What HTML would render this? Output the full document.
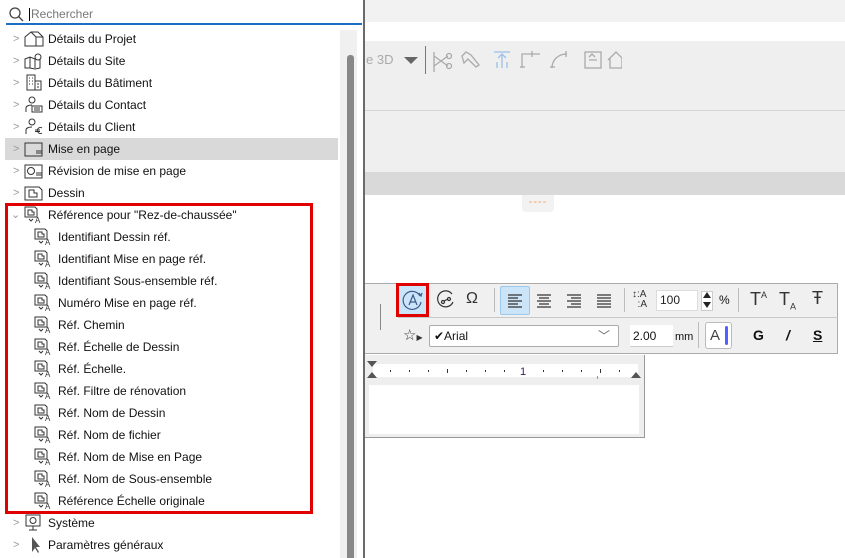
<!DOCTYPE html>
<html><head><meta charset="utf-8"><style>
*{margin:0;padding:0;box-sizing:border-box}
body{width:845px;height:558px;position:relative;overflow:hidden;background:#fff;font-family:"Liberation Sans",sans-serif;font-size:12px;color:#111}
.a{position:absolute}
.row{position:absolute;left:5px;width:333px;height:22px;line-height:22px}
.row .t{position:absolute;left:43px;top:0;white-space:nowrap}
.row.sub .t{left:53px}
.chev{position:absolute;left:8px;top:0;color:#999;font-size:11px}
.ic{position:absolute;left:19px;top:2px}
.row.sub .ic{left:29px}
.tb{color:#333;font-size:13px}
</style></head><body>
<div class="a" style="left:365px;top:0;width:480px;height:22px;background:#f2f2f2"></div>
<div class="a" style="left:365px;top:41px;width:480px;height:131px;background:#efefef"></div>
<div class="a" style="left:365px;top:110px;width:480px;height:1px;background:#d4d4d4"></div>
<div class="a" style="left:365px;top:172px;width:480px;height:23px;background:#d9d9d9"></div>
<div class="a" style="left:522px;top:195px;width:32px;height:17px;background:#f2f2f2;border-radius:0 0 4px 4px;color:#f5a050;font-size:11px;text-align:center;line-height:14px;letter-spacing:1px">----</div>
<div class="a" style="left:366px;top:52px;color:#aaa;font-size:13px">e 3D</div>
<div class="a" style="left:404px;top:57px;width:0;height:0;border-left:7px solid transparent;border-right:7px solid transparent;border-top:7px solid #666"></div>
<div class="a" style="left:425px;top:46px;width:1px;height:28px;background:#777"></div>
<svg class="a" style="left:432px;top:48px" width="190" height="24" fill="none" stroke="#aaa" stroke-width="1.3">
<path d="M2 4v24M2 8l14 10M2 18l14-10"/><circle cx="17" cy="8" r="2.5"/><circle cx="17" cy="18" r="2.5"/>
<path d="M30 8l4-4 5 3 8 10-3 2-8-8-4 4z"/>
<path d="M62 4h16M70 20V6M66 10l4-4 4 4M65 20v-6M75 20v-6" stroke="#9bbfe8"/>
<path d="M90 20V6h18M100 3v6M88 19h5"/>
<path d="M120 20c0-8 6-14 15-14M134 3v6M118 19h5"/>
<rect x="153" y="4" width="16" height="16"/><path d="M157 12h8M157 9l3-3 3 3"/>
<path d="M176 12l8-8 8 8M178 10v10h12V10"/>
</svg>
<div class="a" style="left:365px;top:283px;width:473px;height:71px;background:#f0f0f0;border:1px solid #ababab;border-left:none"></div>
<div class="a" style="left:398px;top:317px;width:440px;height:1px;background:#c8c8c8"></div>
<div class="a" style="left:380px;top:304px;width:1px;height:26px;background:#888"></div>
<div class="a" style="left:396px;top:283px;width:33px;height:34px;border:3px solid #e00000;background:#cce4f7"></div>
<svg class="a" style="left:401px;top:288px" width="24" height="24" fill="none" stroke="#3b5b8c" stroke-width="1.2"><path d="M19 8a9 9 0 1 0 1 6"/><path d="M8 17l4-10 4 10M9.5 14h5"/><path d="M18 5l2 3 1-3"/></svg>
<svg class="a" style="left:434px;top:288px" width="24" height="24" fill="none" stroke="#333" stroke-width="1.2"><path d="M18 6a8 8 0 1 0 1 8"/><circle cx="9" cy="14" r="1.5"/><circle cx="15" cy="11" r="1.5"/><path d="M10 13l4-2"/></svg>
<div class="a tb" style="left:466px;top:290px;font-size:16px">Ω</div>
<div class="a" style="left:494px;top:288px;width:1px;height:24px;background:#bbb"></div>
<div class="a" style="left:500px;top:286px;width:30px;height:29px;background:#cce4f7;border:1px solid #99c9ef;border-radius:2px"></div>
<svg class="a" style="left:505px;top:292px" width="110" height="16" stroke="#333" stroke-width="1.3"><path d="M3 3h14M3 6h10M3 9h14M3 12h10M3 15h14"/><path d="M32 3h14M34 6h10M32 9h14M34 12h10M32 15h14"/><path d="M62 3h14M66 6h10M62 9h14M66 12h10M62 15h14"/><path d="M92 3h14M92 6h14M92 9h14M92 12h14M92 15h14"/></svg>
<div class="a" style="left:624px;top:288px;width:1px;height:24px;background:#bbb"></div>
<div class="a" style="left:632px;top:290px;font-size:10px;line-height:10px;color:#333">↕:A<br>&nbsp;&nbsp;:A</div>
<div class="a" style="left:656px;top:290px;width:42px;height:21px;background:#fff;border:1px solid #ddd;line-height:19px;padding-left:3px;font-size:12px;color:#222">100</div>
<div class="a" style="left:701px;top:291px;width:12px;height:20px;background:#fff;border:1px solid #ccc"></div>
<div class="a" style="left:703px;top:292px;border-left:4px solid transparent;border-right:4px solid transparent;border-bottom:6px solid #222"></div>
<div class="a" style="left:703px;top:302px;border-left:4px solid transparent;border-right:4px solid transparent;border-top:6px solid #222"></div>
<div class="a" style="left:719px;top:293px;font-size:12px">%</div>
<div class="a" style="left:738px;top:288px;width:1px;height:24px;background:#bbb"></div>
<div class="a tb" style="left:750px;top:289px;font-size:18px">T<sup style="font-size:9px">A</sup></div>
<div class="a tb" style="left:779px;top:289px;font-size:18px">T<sub style="font-size:9px">A</sub></div>
<div class="a tb" style="left:812px;top:288px;font-size:18px">Ŧ</div>
<div class="a" style="left:403px;top:326px;font-size:15px;color:#333">☆<span style="font-size:8px">▶</span></div>
<div class="a" style="left:429px;top:325px;width:190px;height:22px;background:#fff;border:1px solid #aaa;border-radius:2px;line-height:20px;padding-left:4px;font-size:12px">✔Arial<span style="position:absolute;right:8px;top:0;color:#666">﹀</span></div>
<div class="a" style="left:630px;top:325px;width:43px;height:22px;background:#fff;border-bottom:1px solid #ccc;line-height:22px;padding-left:3px;font-size:12px">2.00</div>
<div class="a" style="left:675px;top:331px;font-size:11px">mm</div>
<div class="a" style="left:698px;top:322px;width:1px;height:26px;background:#bbb"></div>
<div class="a" style="left:705px;top:322px;width:27px;height:27px;background:#fff;border:1px solid #bbb;border-radius:3px;font-size:15px;line-height:25px;padding-left:4px;color:#444">A</div>
<div class="a" style="left:725px;top:326px;width:3px;height:19px;background:#5560ff;border-radius:2px"></div>
<div class="a" style="left:753px;top:327px;font-weight:bold;font-size:14px">G</div>
<div class="a" style="left:786px;top:327px;font-weight:bold;font-style:italic;font-size:14px">/</div>
<div class="a" style="left:813px;top:327px;font-weight:bold;font-size:14px;text-decoration:underline">S</div>
<div class="a" style="left:365px;top:355px;width:280px;height:83px;background:#eee;border:1px solid #999;border-left:none;border-top:none"></div>
<div class="a" style="left:373px;top:364px;width:265px;height:13px;background:#fff"></div>
<svg class="a" style="left:365px;top:360px" width="280" height="22">
<path d="M2 1h10l-5 6zM2 18h10l-5-6z" fill="#555"/><path d="M266 18h10l-5-6z" fill="#555"/>
<g fill="#333"><rect x="25" y="10" width="1" height="2"/><rect x="44" y="10" width="1" height="2"/><rect x="63" y="10" width="1" height="2"/><rect x="82" y="9" width="1" height="4"/><rect x="101" y="10" width="1" height="2"/><rect x="120" y="10" width="1" height="2"/><rect x="139" y="10" width="1" height="2"/><rect x="178" y="10" width="1" height="2"/><rect x="197" y="10" width="1" height="2"/><rect x="216" y="10" width="1" height="2"/><rect x="235" y="9" width="1" height="4"/><rect x="254" y="10" width="1" height="2"/><rect x="232" y="16" width="1" height="3" fill="#999"/></g>
<text x="155" y="15" font-size="11" fill="#402060" font-family="Liberation Sans">1</text>
</svg>
<div class="a" style="left:369px;top:385px;width:270px;height:49px;background:#fff"></div>
<div class="a" style="left:0;top:0;width:365px;height:558px;background:#fff;border-right:2px solid #6a6a6a"></div>
<div class="a" style="left:340px;top:30px;width:17px;height:528px;background:#f0f0f0"></div>
<div class="a" style="left:347px;top:55px;width:7px;height:503px;background:#888;border-radius:3px 3px 0 0"></div>
<div class="a" style="left:6px;top:3px;width:356px;height:22px;background:#fff;border-bottom:2px solid #1a6fc4"></div>
<svg class="a" style="left:9px;top:7px" width="16" height="16" fill="none" stroke="#444" stroke-width="1.3"><circle cx="6" cy="6" r="5"/><path d="M9.5 9.5L14 14"/></svg>
<div class="a" style="left:29px;top:8px;width:1px;height:13px;background:#000"></div>
<div class="a" style="left:31px;top:7px;color:#777;font-size:12px">Rechercher</div>
<div class="a" style="left:5px;top:138px;width:333px;height:22px;background:#d9d9d9"></div>

<div class="row" style="top:28px"><span class="chev">&gt;</span><svg class="ic" width="20" height="18" fill="none" stroke="#333"><path d="M1 16V7l6-5h7l5 5v9zM7 2l5 5v9M12 7h7"/></svg><span class="t">Détails du Projet</span></div>
<div class="row" style="top:50px"><span class="chev">&gt;</span><svg class="ic" width="20" height="18" fill="none" stroke="#333"><path d="M1 16V7l5-2 5 2 5-2v11l-5 1-5-1zM6 5v11M11 7v9"/><circle cx="14" cy="5" r="3" fill="#fff"/></svg><span class="t">Détails du Site</span></div>
<div class="row" style="top:72px"><span class="chev">&gt;</span><svg class="ic" width="20" height="18" fill="none" stroke="#333"><path d="M3 16V1h8v15zM11 7h6v9h-6M5 4h1M8 4h1M5 7h1M8 7h1M5 10h1M8 10h1M13 10h2M13 13h2"/></svg><span class="t">Détails du Bâtiment</span></div>
<div class="row" style="top:94px"><span class="chev">&gt;</span><svg class="ic" width="20" height="18" fill="none" stroke="#333"><circle cx="8" cy="4" r="3"/><path d="M2 16v-4c0-2 3-3 6-3M8 10h10v6H8zM10 12h6M10 14h6"/></svg><span class="t">Détails du Contact</span></div>
<div class="row" style="top:116px"><span class="chev">&gt;</span><svg class="ic" width="20" height="18" fill="none" stroke="#333"><circle cx="8" cy="4" r="3"/><path d="M2 16v-4c0-2 3-3 6-3M18 10a3 3 0 1 0 0 5M11 12h5M11 13.5h5"/></svg><span class="t">Détails du Client</span></div>
<div class="row" style="top:138px"><span class="chev">&gt;</span><svg class="ic" width="20" height="18" fill="none" stroke="#333"><path d="M1 3h17v13H1zM12 13h6M12 11h6"/></svg><span class="t">Mise en page</span></div>
<div class="row" style="top:160px"><span class="chev">&gt;</span><svg class="ic" width="20" height="18" fill="none" stroke="#333"><path d="M1 3h17v13H1zM12 13h6M12 11h6"/><circle cx="7" cy="9" r="3.5"/></svg><span class="t">Révision de mise en page</span></div>
<div class="row" style="top:182px"><span class="chev">&gt;</span><svg class="ic" width="20" height="18" fill="none" stroke="#333"><path d="M1 3h14l3 3v10H1zM5 13V6h5v3h3v4z"/></svg><span class="t">Dessin</span></div>
<div class="row" style="top:204px"><span class="chev" style="left:6px">⌄</span><svg class="ic" width="20" height="18" fill="none" stroke="#333"><path d="M1 1h10l2 2v8H1zM4 9V4h4v2h2v3zM5 13l2 2 2-2"/><text x="11" y="17" font-size="8" fill="#333" stroke="none" font-family="Liberation Sans">A</text></svg><span class="t">Référence pour "Rez-de-chaussée"</span></div>

<div class="row sub" style="top:226px"><svg class="ic" width="20" height="18" fill="none" stroke="#333"><path d="M1 1h10l2 2v8H1zM4 9V4h4v2h2v3zM5 13l2 2 2-2"/><text x="11" y="17" font-size="8" fill="#333" stroke="none" font-family="Liberation Sans">A</text></svg><span class="t">Identifiant Dessin réf.</span></div>
<div class="row sub" style="top:248px"><svg class="ic" width="20" height="18" fill="none" stroke="#333"><path d="M1 1h10l2 2v8H1zM4 9V4h4v2h2v3zM5 13l2 2 2-2"/><text x="11" y="17" font-size="8" fill="#333" stroke="none" font-family="Liberation Sans">A</text></svg><span class="t">Identifiant Mise en page réf.</span></div>
<div class="row sub" style="top:270px"><svg class="ic" width="20" height="18" fill="none" stroke="#333"><path d="M1 1h10l2 2v8H1zM4 9V4h4v2h2v3zM5 13l2 2 2-2"/><text x="11" y="17" font-size="8" fill="#333" stroke="none" font-family="Liberation Sans">A</text></svg><span class="t">Identifiant Sous-ensemble réf.</span></div>
<div class="row sub" style="top:292px"><svg class="ic" width="20" height="18" fill="none" stroke="#333"><path d="M1 1h10l2 2v8H1zM4 9V4h4v2h2v3zM5 13l2 2 2-2"/><text x="11" y="17" font-size="8" fill="#333" stroke="none" font-family="Liberation Sans">A</text></svg><span class="t">Numéro Mise en page réf.</span></div>
<div class="row sub" style="top:314px"><svg class="ic" width="20" height="18" fill="none" stroke="#333"><path d="M1 1h10l2 2v8H1zM4 9V4h4v2h2v3zM5 13l2 2 2-2"/><text x="11" y="17" font-size="8" fill="#333" stroke="none" font-family="Liberation Sans">A</text></svg><span class="t">Réf. Chemin</span></div>
<div class="row sub" style="top:336px"><svg class="ic" width="20" height="18" fill="none" stroke="#333"><path d="M1 1h10l2 2v8H1zM4 9V4h4v2h2v3zM5 13l2 2 2-2"/><text x="11" y="17" font-size="8" fill="#333" stroke="none" font-family="Liberation Sans">A</text></svg><span class="t">Réf. Échelle de Dessin</span></div>
<div class="row sub" style="top:358px"><svg class="ic" width="20" height="18" fill="none" stroke="#333"><path d="M1 1h10l2 2v8H1zM4 9V4h4v2h2v3zM5 13l2 2 2-2"/><text x="11" y="17" font-size="8" fill="#333" stroke="none" font-family="Liberation Sans">A</text></svg><span class="t">Réf. Échelle.</span></div>
<div class="row sub" style="top:380px"><svg class="ic" width="20" height="18" fill="none" stroke="#333"><path d="M1 1h10l2 2v8H1zM4 9V4h4v2h2v3zM5 13l2 2 2-2"/><text x="11" y="17" font-size="8" fill="#333" stroke="none" font-family="Liberation Sans">A</text></svg><span class="t">Réf. Filtre de rénovation</span></div>
<div class="row sub" style="top:402px"><svg class="ic" width="20" height="18" fill="none" stroke="#333"><path d="M1 1h10l2 2v8H1zM4 9V4h4v2h2v3zM5 13l2 2 2-2"/><text x="11" y="17" font-size="8" fill="#333" stroke="none" font-family="Liberation Sans">A</text></svg><span class="t">Réf. Nom de Dessin</span></div>
<div class="row sub" style="top:424px"><svg class="ic" width="20" height="18" fill="none" stroke="#333"><path d="M1 1h10l2 2v8H1zM4 9V4h4v2h2v3zM5 13l2 2 2-2"/><text x="11" y="17" font-size="8" fill="#333" stroke="none" font-family="Liberation Sans">A</text></svg><span class="t">Réf. Nom de fichier</span></div>
<div class="row sub" style="top:446px"><svg class="ic" width="20" height="18" fill="none" stroke="#333"><path d="M1 1h10l2 2v8H1zM4 9V4h4v2h2v3zM5 13l2 2 2-2"/><text x="11" y="17" font-size="8" fill="#333" stroke="none" font-family="Liberation Sans">A</text></svg><span class="t">Réf. Nom de Mise en Page</span></div>
<div class="row sub" style="top:468px"><svg class="ic" width="20" height="18" fill="none" stroke="#333"><path d="M1 1h10l2 2v8H1zM4 9V4h4v2h2v3zM5 13l2 2 2-2"/><text x="11" y="17" font-size="8" fill="#333" stroke="none" font-family="Liberation Sans">A</text></svg><span class="t">Réf. Nom de Sous-ensemble</span></div>
<div class="row sub" style="top:490px"><svg class="ic" width="20" height="18" fill="none" stroke="#333"><path d="M1 1h10l2 2v8H1zM4 9V4h4v2h2v3zM5 13l2 2 2-2"/><text x="11" y="17" font-size="8" fill="#333" stroke="none" font-family="Liberation Sans">A</text></svg><span class="t">Référence Échelle originale</span></div>

<div class="row" style="top:512px"><span class="chev">&gt;</span><svg class="ic" width="20" height="18" fill="none" stroke="#333"><path d="M2 1h14v11H2zM9 12v4M5 16h8"/><circle cx="9" cy="6.5" r="3"/></svg><span class="t">Système</span></div>
<div class="row" style="top:534px"><span class="chev">&gt;</span><svg class="ic" width="20" height="18"><path d="M8 1v15l3-4 3 5 1-1-3-5h4z" fill="#555"/></svg><span class="t">Paramètres généraux</span></div>

<div class="a" style="left:5px;top:203px;width:308px;height:311px;border:3px solid #e00000"></div>
</body></html>
